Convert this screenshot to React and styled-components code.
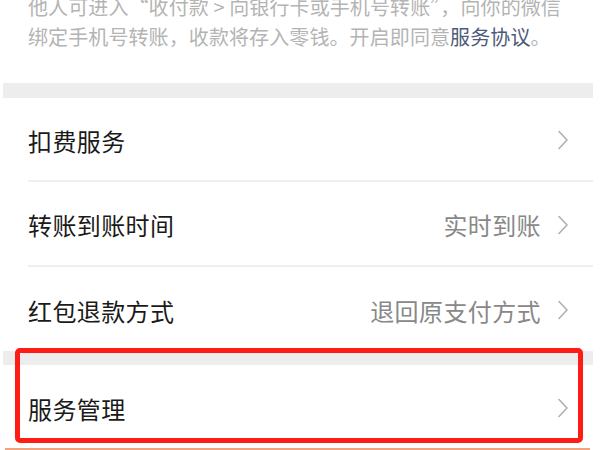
import React from "react";
import styled, { createGlobalStyle } from "styled-components";

const Global = createGlobalStyle`
  html, body { margin: 0; padding: 0; background: #ffffff; }
  body {
    width: 600px; height: 450px; overflow: hidden;
    font-family: "Noto Sans CJK SC", "Noto Sans", sans-serif;
  }
`;

const Page = styled.div`
  position: relative;
  width: 600px;
  height: 450px;
  overflow: hidden;
  background: #ffffff;
  padding: 0 7px 0 3px;
  box-sizing: border-box;
`;

const Notice = styled.p`
  margin: -8px 0 0 0;
  padding: 0 0 31px 25px;
  font-size: 20px;
  line-height: 30px;
  color: #b4b4b4;
  white-space: nowrap;
  letter-spacing: 0.1px;
`;

const Link = styled.span`
  color: #4d5a7a;
`;

const Gap = styled.div`
  height: ${(p) => p.h}px;
  background: #ededed;
`;

const Row = styled.div`
  display: flex;
  align-items: center;
  height: ${(p) => p.h}px;
  margin-left: 25px;
  padding: 2px 24px 0 0;
  box-sizing: border-box;
  border-bottom: ${(p) => (p.divider ? "2px solid #efefef" : "none")};
`;

const Label = styled.span`
  flex: 1;
  font-size: 24px;
  color: #1a1a1a;
  letter-spacing: 0.4px;
`;

const Value = styled.span`
  font-size: 24px;
  color: #888888;
  margin-right: 16px;
  letter-spacing: 0.4px;
`;

const Chevron = () => (
  <svg width="12" height="20" viewBox="0 0 12 20" fill="none">
    <path d="M2 1.5 L10 10 L2 18.5" stroke="#b0b0b0" strokeWidth="1.6" strokeLinecap="round" strokeLinejoin="round" />
  </svg>
);

const Highlight = styled.div`
  position: absolute;
  left: 15px;
  top: 348px;
  width: 568px;
  height: 95px;
  box-sizing: border-box;
  border: 5px solid #ff1c14;
  border-radius: 5px;
  pointer-events: none;
`;

const BottomLine = styled.div`
  position: absolute;
  left: 5px;
  right: 10px;
  top: 448px;
  height: 2px;
  background: #f3a27e;
`;

const rows = [
  { label: "扣费服务", h: 84, divider: true },
  { label: "转账到账时间", value: "实时到账", h: 85, divider: true },
  { label: "红包退款方式", value: "退回原支付方式", h: 84 },
];

export default function App() {
  return (
    <>
      <Global />
      <Page>
        <Notice>
          他人可进入“收付款 &gt; 向银行卡或手机号转账”，向你的微信
          <br />
          绑定手机号转账，收款将存入零钱。开启即同意<Link>服务协议</Link>。
        </Notice>
        <Gap h={15} />
        {rows.map((r) => (
          <Row key={r.label} h={r.h} divider={r.divider}>
            <Label>{r.label}</Label>
            {r.value && <Value>{r.value}</Value>}
            <Chevron />
          </Row>
        ))}
        <Gap h={14} />
        <Row h={84}>
          <Label>服务管理</Label>
          <Chevron />
        </Row>
        <Highlight />
        <BottomLine />
      </Page>
    </>
  );
}
